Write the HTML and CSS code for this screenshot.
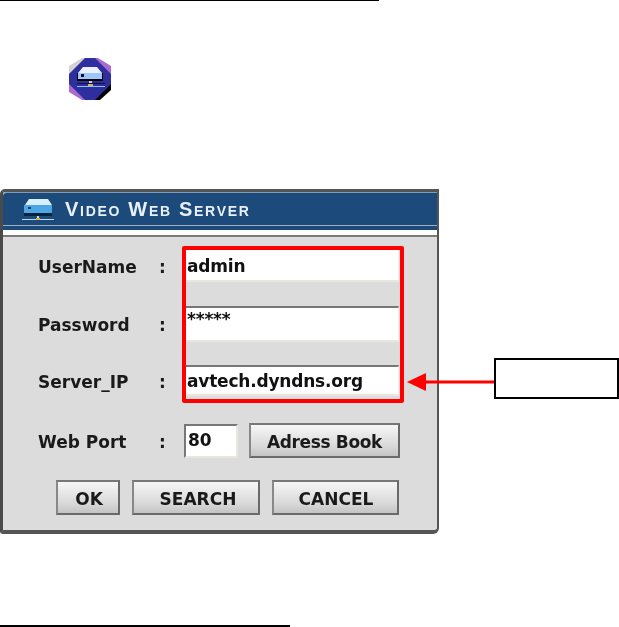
FILE: index.html
```html
<!DOCTYPE html>
<html lang="en">
<head>
<meta charset="utf-8">
<title>Video Web Server</title>
<link rel="stylesheet" href="styles.css">
</head>
<body>
<div class="page">
  <div class="rule rule-top"></div>
  <div class="app-icon">
    <svg width="44" height="44" viewBox="0 0 44 44">
      <polygon points="16,1 28,1 43,16 43,28 28,43 16,43 1,28 1,16" fill="#2e2e9e"/>
      <polygon points="1,9 14,1 17,1 1,17" fill="#d2d2d2"/>
      <polygon points="27,1 30,1 43,9 43,17" fill="#a86cd0"/>
      <polygon points="1,27 17,43 14,43 1,35" fill="#a86cd0"/>
      <polygon points="43,27 43,33 32,43 27,43" fill="#000"/>
      <polygon points="15,10 29,10 34,16 10,16" fill="#eaf0ff"/>
      <rect x="9" y="16" width="26" height="8" fill="#000"/>
      <rect x="10" y="16" width="24" height="6" fill="#9cc6fc"/>
      <rect x="13" y="17" width="3" height="3" fill="#10103a"/>
      <rect x="21" y="24" width="3" height="4" fill="#c8d0e0"/>
      <rect x="9" y="26" width="28" height="1" fill="#10103a"/>
      <rect x="9" y="29" width="28" height="1" fill="#8cc0f0"/>
      <rect x="20" y="27" width="5" height="2" fill="#c8b860"/>
    </svg>
  </div>
  <section class="dialog">
    <header class="titlebar">
      <svg class="title-icon" width="32" height="24" viewBox="0 0 32 24">
        <polygon points="7,1 26,1 30,7 3,7" fill="#d8f0fc"/>
        <rect x="2" y="7" width="28" height="8" fill="#4fa6e4"/>
        <rect x="2" y="15" width="28" height="3" fill="#06223c"/>
        <rect x="6" y="9" width="3" height="2" fill="#0c3a66"/>
        <rect x="15" y="18" width="2" height="3" fill="#c8d8e8"/>
        <rect x="0" y="21" width="32" height="1" fill="#bcd8ee"/>
        <rect x="14" y="20" width="4" height="2" fill="#d8b040"/>
      </svg>
      <h1 class="title">Video Web Server</h1>
    </header>
    <div class="stripe"></div>
    <div class="form">
      <div class="row row-user">
        <span class="label">UserName</span><span class="colon">:</span>
        <div class="input wide">admin</div>
      </div>
      <div class="row row-pass">
        <span class="label">Password</span><span class="colon">:</span>
        <div class="input wide stars">*****</div>
      </div>
      <div class="row row-ip">
        <span class="label">Server_IP</span><span class="colon">:</span>
        <div class="input wide">avtech.dyndns.org</div>
      </div>
      <div class="row row-port">
        <span class="label">Web Port</span><span class="colon">:</span>
        <div class="input port">80</div>
        <button class="btn btn-book">Adress Book</button>
      </div>
      <div class="actions">
        <button class="btn btn-ok">OK</button>
        <button class="btn btn-search">SEARCH</button>
        <button class="btn btn-cancel">CANCEL</button>
      </div>
    </div>
  </section>
  <div class="rule rule-bottom"></div>

  <div class="highlight"></div>
  <svg class="arrow" width="88" height="20" viewBox="0 0 88 20">
    <polygon points="0,10 19,1 19,19" fill="#ff0000"/>
    <rect x="18" y="8.5" width="70" height="3" fill="#ff0000"/>
  </svg>
  <div class="callout"></div>
</div>
</body>
</html>
```
FILE: styles.css
```css
* { box-sizing: border-box; }
html, body { margin: 0; padding: 0; background: #fff; }
.page {
  position: relative;
  width: 619px;
  height: 627px;
  overflow: hidden;
  display: flex;
  flex-direction: column;
  font-family: "DejaVu Sans", sans-serif;
}
.rule { background: #000; flex: none; }
.rule-top { width: 379px; height: 1px; }
.rule-bottom { width: 290px; height: 2px; margin-top: 91px; }
.app-icon { height: 44px; margin: 56px 0 0 68px; flex: none; filter: blur(0.4px); }
.app-icon svg { display: block; }

.dialog {
  flex: none;
  margin-top: 88px;
  width: 439px;
  height: 345px;
  background: #dcdcdc;
  border: 3px solid #555;
  border-bottom-width: 4px;
  border-right-width: 2px;
  border-radius: 5px 0 6px 3px;
  border-left-color: #4a4a4a;
  display: flex;
  flex-direction: column;
  filter: blur(0.35px);
}
.titlebar {
  height: 34px;
  background: #1c4a7a;
  border-top: 1px solid #7f9bb6;
  border-bottom: 1px solid #9fb0c0;
  border-radius: 4px 0 0 0;
  display: flex;
  align-items: center;
  padding: 0 0 0 19px;
  flex: none;
}
.title-icon { display: block; margin-top: 2px; }
.title {
  margin: 0 0 0 11px;
  font-family: "Liberation Sans", Arial, sans-serif;
  font-size: 20px;
  line-height: 22px;
  font-weight: bold;
  font-variant: small-caps;
  letter-spacing: 1.7px;
  color: #e9eff5;
}
.stripe {
  height: 11px;
  flex: none;
  background: #fff;
  border-top: 4px solid #1c4a7a;
  border-bottom: 2px solid #7a7a7a;
}
.form { padding: 13px 0 0 35px; }

.row { display: flex; align-items: center; }
.row-user { height: 32px; }
.row-pass { height: 36px; margin-top: 24px; }
.row-ip { height: 31px; margin-top: 23px; }
.row-port { height: 35px; margin-top: 27px; }

.label, .colon, .input, .btn {
  font-family: "DejaVu Sans", sans-serif;
  font-weight: bold;
  font-size: 17px;
  color: #1a1a1a;
}
.label, .colon { padding-top: 2px; }
.label { width: 121px; }
.colon { width: 26px; }
.input {
  background: #fff;
  height: 100%;
  padding: 4px 0 0 1px;
  line-height: 24px;
  letter-spacing: -0.2px;
  color: #111;
}
.wide {
  width: 213px;
  margin-left: 1px;
  border-bottom: 2px solid #e8e6de;
  border-right: 1px solid #eeeeea;
}
.row-pass .wide, .row-ip .wide { border-top: 2px solid #777; }
.row-ip .wide { padding-top: 2px; }
.stars { line-height: 18px; padding-top: 2px; }
.port {
  width: 54px;
  margin-left: -1px;
  height: 34px;
  padding-left: 2px;
  padding-top: 2px;
  border: 2px solid #e8e6de;
  border-top-color: #777;
  border-left-color: #777;
}
.btn {
  height: 35px;
  padding: 2px 0 0;
  background: linear-gradient(#f6f6f6, #d8d8d8 70%, #c4c4c4);
  border: 2px solid #6a6a6a;
  border-top-color: #777;
  border-left-color: #888;
  border-radius: 0;
  text-align: center;
}
.btn-book { width: 151px; margin-left: 11px; letter-spacing: -0.35px; }
.actions { display: flex; margin: 22px 0 0 18px; }
.btn-ok { width: 64px; padding-left: 2px; }
.btn-search { width: 128px; margin-left: 12px; padding-left: 4px; }
.btn-cancel { width: 127px; margin-left: 12px; padding-left: 1px; }

.highlight {
  position: absolute;
  left: 182px;
  top: 246px;
  width: 222px;
  height: 157px;
  border: 4px solid #ff0000;
  border-radius: 2px;
}
.arrow { position: absolute; left: 407px; top: 372px; }
.callout {
  position: absolute;
  left: 494px;
  top: 358px;
  width: 125px;
  height: 41px;
  border: 2px solid #000;
}
```
